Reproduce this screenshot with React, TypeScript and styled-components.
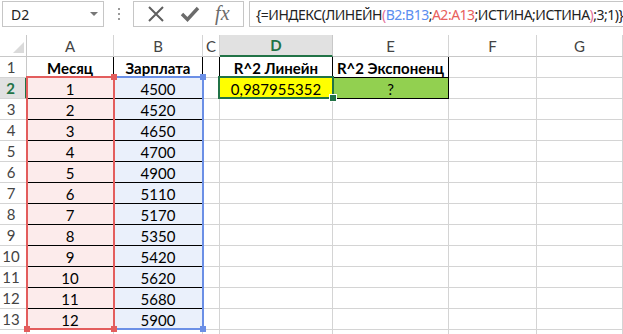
import React from "react";
import styled, {createGlobalStyle, css} from "styled-components";

const GlobalStyle = createGlobalStyle`
  html, body {
    margin: 0;
    padding: 0;
    background: #fff;
    overflow: hidden;
  }
  body {
    font-family: Lato, "Liberation Sans", sans-serif;
    color: #000;
  }
`;

const COLS = ["A", "B", "C", "D", "E", "F", "G"];
const months = [1, 2, 3, 4, 5, 6, 7, 8, 9, 10, 11, 12];
const salary = [4500, 4520, 4650, 4700, 4900, 5110, 5170, 5350, 5420, 5620, 5680, 5900];

type Fill = "pink" | "blue" | "yellow" | "green" | undefined;

const fills: Record<string, string> = {
    pink: "#fcebeb",
    blue: "#eaf0fb",
    yellow: "#ffff00",
    green: "#92d050",
};

export default function App() {
    const rows: React.ReactNode[] = [];

    // 13 filled rows + a sliver of row 14 at the bottom edge
    for (let r = 1; r <= 14; r++) {
        rows.push(
            <RowHeader key={"h" + r} active={r === 2}>{r <= 13 ? r : ""}</RowHeader>
        );
        COLS.forEach((c) => {
            let text: React.ReactNode = "";
            let fill: Fill;
            let bold = false;
            let rb = false;
            let bb = false;
            const inTable = r <= 13 && (c === "A" || c === "B");
            if (inTable) {
                bb = true;
                rb = true;
                if (r === 1) {
                    bold = true;
                    text = c === "A" ? "Месяц" : "Зарплата";
                } else {
                    fill = c === "A" ? "pink" : "blue";
                    text = c === "A" ? months[r - 2] : salary[r - 2];
                }
            }
            if (r <= 2 && (c === "C" || c === "D" || c === "E")) {
                rb = true;
                if (c !== "C") bb = true;
            }
            if (r === 1 && c === "D") {
                bold = true;
                text = "R^2 Линейн";
            }
            if (r === 1 && c === "E") {
                bold = true;
                text = "R^2 Экспоненц";
            }
            if (r === 2 && c === "D") {
                fill = "yellow";
                text = "0,987955352";
            }
            if (r === 2 && c === "E") {
                fill = "green";
                text = "?";
            }
            rows.push(
                <Cell key={c + r} fill={fill} bold={bold} rb={rb} bb={bb}>{text}</Cell>
            );
        });
    }

    return (
        <>
            <GlobalStyle/>
            <FormulaBar>
                <NameBox>
                    <span>D2</span>
                    <DropArrow/>
                </NameBox>
                <Grip>
                    <i/><i/><i/>
                </Grip>
                <ButtonGroup>
                    <svg width="18" height="18" viewBox="0 0 18 18">
                        <path d="M2 2 L16 16 M16 2 L2 16" stroke="#5f5f5f" strokeWidth="2" fill="none"/>
                    </svg>
                    <svg width="20" height="18" viewBox="0 0 20 18">
                        <path d="M2 9 L7.5 14.5 L18 3" stroke="#6b6b6b" strokeWidth="3.4" fill="none"/>
                    </svg>
                    <Fx>fx</Fx>
                </ButtonGroup>
                <FormulaInput>
                    {"{=ИНДЕКС(ЛИНЕЙН"}
                    <Ref color="#e4709a">(</Ref>
                    <Ref color="#5b8ef0">B2:B13</Ref>
                    ;
                    <Ref color="#e8605c">A2:A13</Ref>
                    ;ИСТИНА;ИСТИНА
                    <Ref color="#e4709a">)</Ref>
                    {";3;1)}"}
                </FormulaInput>
            </FormulaBar>
            <Sheet>
                <Corner>
                    <svg width="11" height="11" viewBox="0 0 11 11">
                        <path d="M11 0 L11 11 L0 11 Z" fill="#dadada"/>
                    </svg>
                </Corner>
                {COLS.map((c) => (
                    <ColHeader key={c} active={c === "D"}>{c}</ColHeader>
                ))}
                {rows}

                <RangeBox color="#6b8fe6" style={{left: 113, top: 41, width: 91, height: 254}}>
                    <Handle color="#6b8fe6" corner="tr"/>
                    <Handle color="#6b8fe6" corner="br"/>
                </RangeBox>
                <RangeBox color="#e35d5d" style={{left: 26, top: 41, width: 89, height: 254}}>
                    <Handle color="#e35d5d" corner="tr"/>
                    <Handle color="#e35d5d" corner="br"/>
                    <Handle color="#e35d5d" corner="bl"/>
                </RangeBox>
                <Selection>
                    <FillHandle/>
                </Selection>
            </Sheet>
        </>
    );
}

const FormulaBar = styled.div`
  display: flex;
  align-items: flex-start;
  height: 28px;
  padding-top: 1px;
  margin-bottom: 7px;
  box-sizing: border-box;
  font-family: "Noto Sans", "Open Sans", sans-serif;
  font-size: 14px;
`;

const NameBox = styled.div`
  box-sizing: border-box;
  margin-left: 2px;
  width: 102px;
  height: 26px;
  border: 1px solid #c6c6c6;
  display: flex;
  align-items: center;
  justify-content: space-between;
  padding: 0 5px 0 8px;
  color: #222;
`;

const DropArrow = styled.div`
  width: 0;
  height: 0;
  border-left: 4px solid transparent;
  border-right: 4px solid transparent;
  border-top: 4px solid #777;
`;

const Grip = styled.div`
  width: 29px;
  height: 26px;
  display: flex;
  flex-direction: column;
  align-items: center;
  justify-content: center;
  gap: 3px;

  i {
    display: block;
    width: 2px;
    height: 2px;
    background: #9a9a9a;
  }
`;

const ButtonGroup = styled.div`
  box-sizing: border-box;
  width: 111px;
  height: 26px;
  border: 1px solid #c6c6c6;
  display: flex;
  align-items: center;
  justify-content: space-around;
  padding: 0 6px;
`;

const Fx = styled.span`
  font-family: "Liberation Serif", "DejaVu Serif", serif;
  font-style: italic;
  font-size: 20px;
  color: #6b6b6b;
  line-height: 1;
  margin-top: -2px;
`;

const FormulaInput = styled.div`
  box-sizing: border-box;
  flex: 1;
  margin-left: 5px;
  height: 26px;
  border: 1px solid #c6c6c6;
  border-right: none;
  display: flex;
  align-items: center;
  padding-left: 6px;
  white-space: pre;
  overflow: hidden;
  color: #222;
  letter-spacing: -0.5px;
`;

const Ref = styled.span<{ color: string }>`
  color: ${({color}) => color};
`;

const Sheet = styled.div`
  position: relative;
  display: grid;
  grid-template-columns: 27px 87px 89px 17px 113px 116px 88px 1fr;
  grid-template-rows: 22px repeat(14, 21px);
  font-size: 15px;
`;

const Corner = styled.div`
  box-sizing: border-box;
  border-right: 1px solid #c8c8c8;
  border-bottom: 1px solid #c8c8c8;
  display: flex;
  align-items: flex-end;
  justify-content: flex-end;
  padding: 0 2px 3px 0;
`;

const ColHeader = styled.div<{ active?: boolean }>`
  box-sizing: border-box;
  border-right: 1px solid #d4d4d4;
  border-bottom: 1px solid #c8c8c8;
  display: flex;
  align-items: center;
  justify-content: center;
  color: #444;
  ${({active}) => active && css`
    background: #e1e1e1;
    color: #217346;
    font-weight: 700;
    border-bottom: 2px solid #217346;
    border-right-color: #c8c8c8;
  `}
`;

const RowHeader = styled.div<{ active?: boolean }>`
  box-sizing: border-box;
  border-right: 1px solid #c8c8c8;
  border-bottom: 1px solid #d4d4d4;
  display: flex;
  align-items: center;
  justify-content: center;
  padding-right: 4px;
  color: #444;
  ${({active}) => active && css`
    background: #e1e1e1;
    color: #217346;
    font-weight: 700;
    border-right: 2px solid #217346;
  `}
`;

const Cell = styled.div<{ fill?: Fill; bold?: boolean; rb?: boolean; bb?: boolean }>`
  box-sizing: border-box;
  border-right: 1px solid ${({rb}) => (rb ? "#000" : "#d4d4d4")};
  border-bottom: 1px solid ${({bb}) => (bb ? "#000" : "#d4d4d4")};
  background: ${({fill}) => (fill ? fills[fill] : "#fff")};
  font-weight: ${({bold}) => (bold ? 700 : 400)};
  display: flex;
  align-items: center;
  justify-content: center;
  white-space: nowrap;
  overflow: hidden;
  padding-top: 1px;
`;

const RangeBox = styled.div<{ color: string }>`
  position: absolute;
  box-sizing: border-box;
  border: 2px solid ${({color}) => color};
`;

const Handle = styled.div<{ color: string; corner: "tr" | "br" | "bl" }>`
  position: absolute;
  width: 6px;
  height: 6px;
  background: ${({color}) => color};
  ${({corner}) => corner === "tr" && css`top: -4px; right: -4px;`}
  ${({corner}) => corner === "br" && css`bottom: -4px; right: -4px;`}
  ${({corner}) => corner === "bl" && css`bottom: -4px; left: -4px;`}
`;

const Selection = styled.div`
  position: absolute;
  box-sizing: border-box;
  left: 218px;
  top: 41px;
  width: 116px;
  height: 23px;
  border: 2px solid #217346;
`;

const FillHandle = styled.div`
  position: absolute;
  right: -5px;
  bottom: -5px;
  width: 6px;
  height: 6px;
  background: #217346;
  border: 1px solid #fff;
`;
